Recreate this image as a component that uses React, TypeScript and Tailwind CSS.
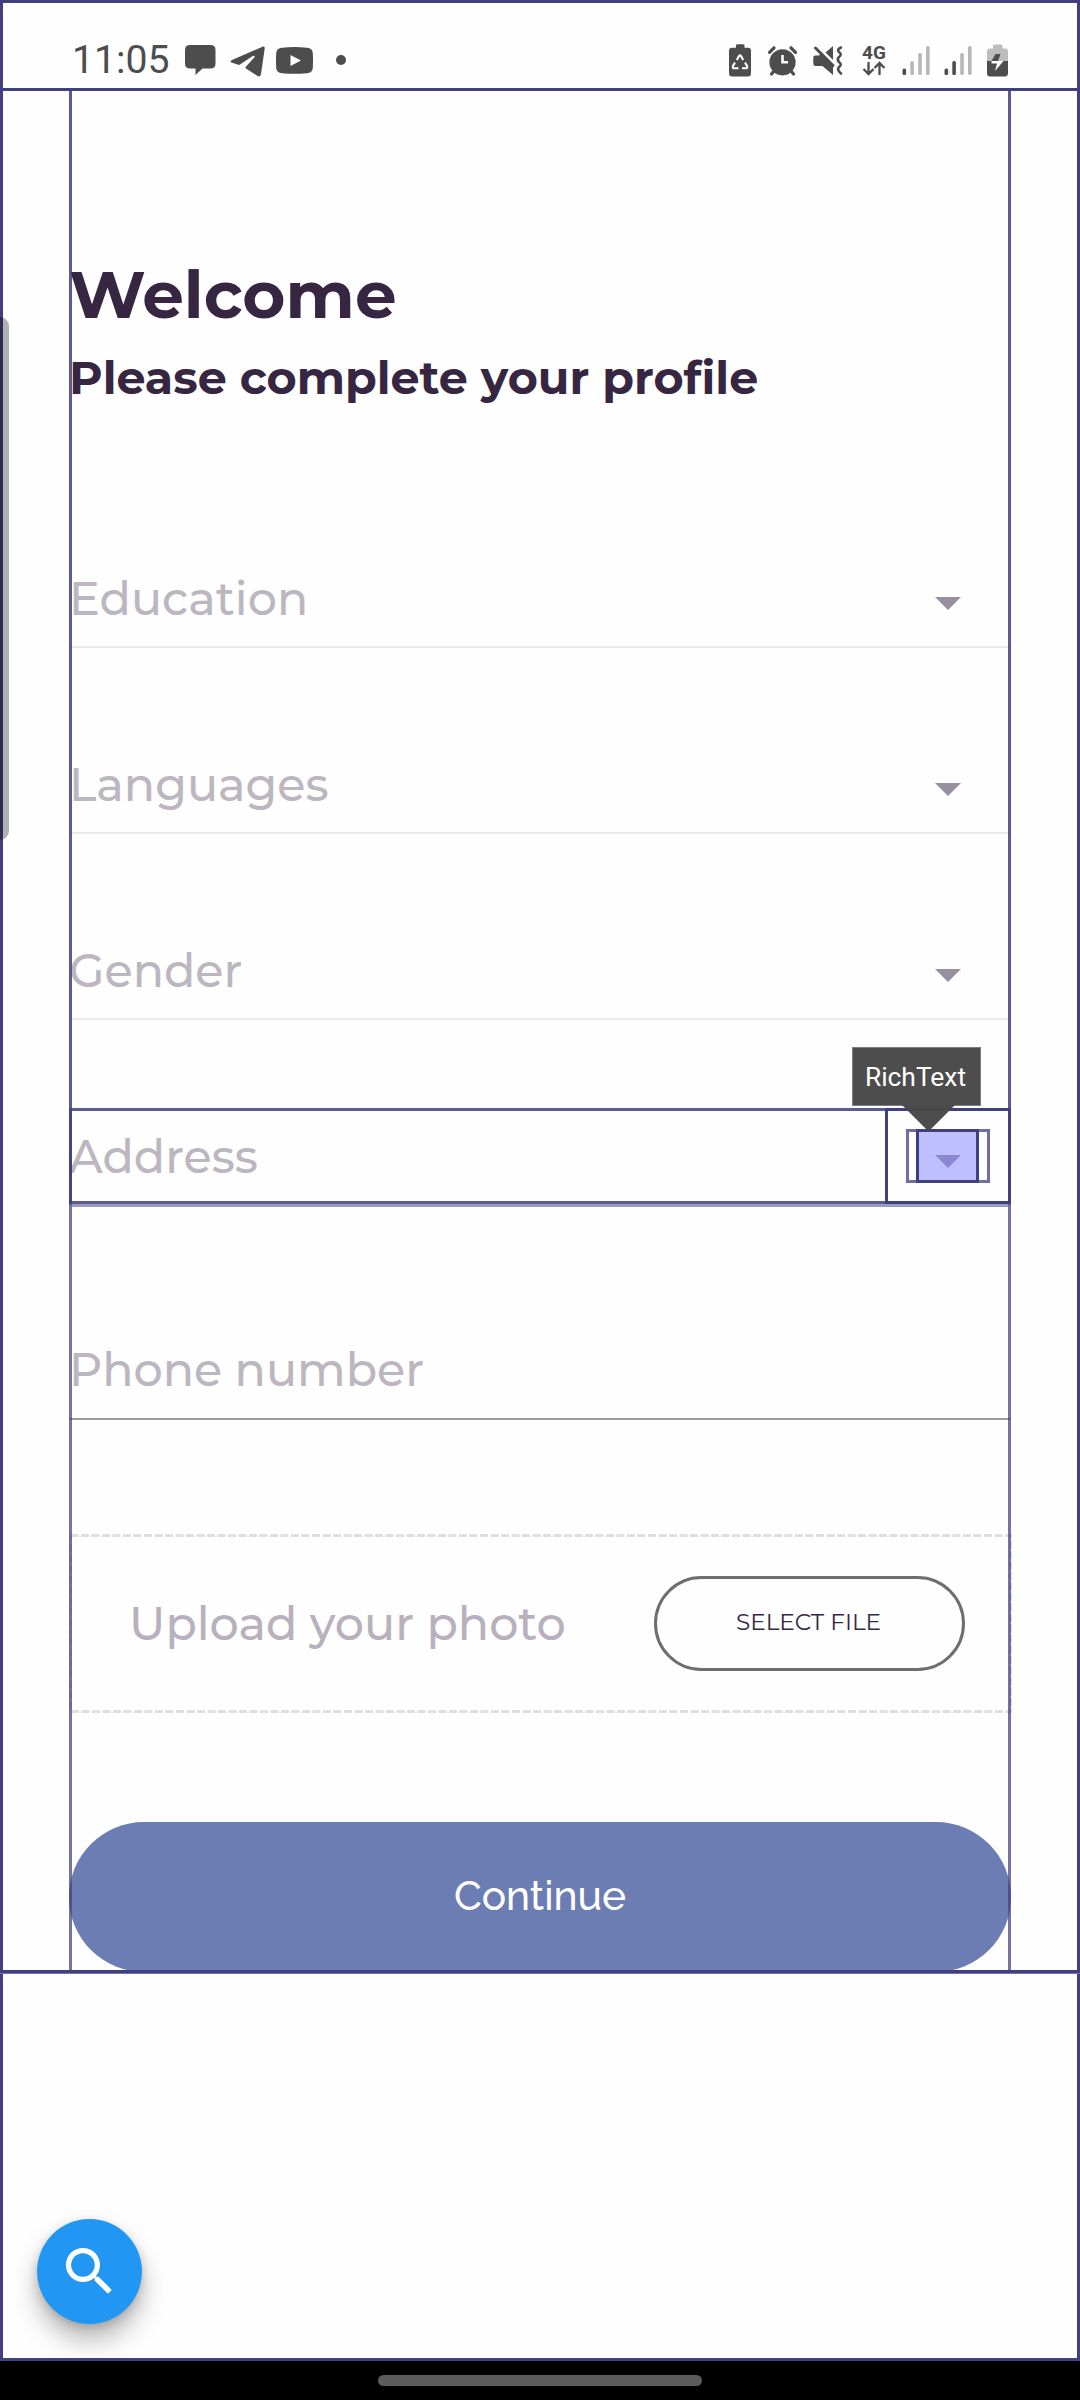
import React from "react";

const ink = "#4d4d4d";

function StatusIcon({ x, w, children }: { x: number; w: number; children: React.ReactNode }) {
  return (
    <svg width={w} height={40} viewBox={`${x} 40 ${w} 40`} fill={ink} className="shrink-0">
      {children}
    </svg>
  );
}

function StatusBar() {
  return (
    <header className="flex h-[88px] shrink-0 items-start pt-10 text-[#4d4d4d]">
      <div className="ml-[72px] flex w-[108px] items-center pt-px">
        <span className="whitespace-nowrap font-['Roboto'] text-[39.2px] leading-[38px] font-normal">11:05</span>
      </div>
      <StatusIcon x={180} w={45}>
        <path d="M190 45H210.500Q215.500 45 215.500 50V63.500Q215.500 68.500 210.500 68.500H202.500L195.500 75V68.500H190Q185 68.500 185 63.500V50Q185 45 190 45Z" />
      </StatusIcon>
      <StatusIcon x={225} w={45}>
        <path d="M263 46.600Q265 46.300 264.700 48.600L261 74Q260.400 77.600 257.300 75.800L246 68.400Q245 67.500 246 66.400L254.500 57.200Q255.200 55.200 252.800 56L240 64.600Q239 65.200 237.500 64.600L231.500 62.500Q229.500 61.500 231.500 60.200Z" />
      </StatusIcon>
      <StatusIcon x={270} w={50}>
        <path fillRule="evenodd" d="M282 47.700Q294.500 46.500 307 47.700Q312.400 48 312.800 53Q313.300 60.500 312.800 68Q312.400 73 307 73.300Q294.500 74.300 282 73.300Q276.700 73 276.200 68Q275.700 60.500 276.200 53Q276.700 48 282 47.700ZM290.500 55V66L301 60.500Z" />
      </StatusIcon>
      <StatusIcon x={320} w={40}>
        <circle cx={341} cy={60} r={5} />
      </StatusIcon>
      <div className="w-[360px]" />
      <StatusIcon x={720} w={44}>
        <path d="M736 45.500Q736 44.300 737.500 44.300H743Q744.500 44.300 744.500 45.500V47.700H748Q751 47.700 751 51V73Q751 76.500 748 76.500H732Q729 76.500 729 73V51Q729 47.700 732 47.700H736Z" />
        <path
          d="M736.800 60L739 56Q740 54.600 741 56L743.200 60M745 62.500L747.200 66.300Q747.600 68.200 746 68.300H742M738.500 68.300H734Q732.400 68.200 732.800 66.300L735 62.500"
          fill="none"
          stroke="#fefefe"
          strokeWidth={2.100}
          strokeLinejoin="round"
        />
      </StatusIcon>
      <StatusIcon x={764} w={44}>
        <circle cx={782.500} cy={62.300} r={13.100} />
        <path d="M769.500 52.300L774 47.800M795.500 52.300L791 47.800M774 71L771.500 74M791 71L793.500 74" fill="none" stroke={ink} strokeWidth={3.200} strokeLinecap="round" />
        <path d="M782.500 55V62.300H788" fill="none" stroke="#fefefe" strokeWidth={2.600} />
      </StatusIcon>
      <StatusIcon x={808} w={44}>
        <path d="M813.300 57.500Q813.300 55.500 815.500 55.500H819L821 53L833 65V75L822.500 66H815.500Q813.300 66 813.300 63.500Z" />
        <path d="M833 46V60L825.500 52.500Z" />
        <path d="M815.500 48L833 65.500" stroke={ink} strokeWidth={3} strokeLinecap="round" />
        <path d="M841 47.500Q836.500 49.500 839 52Q842.500 54.500 839 57Q836.500 59.500 839 62Q842.500 64.500 839 67Q836.500 69.500 841 73.500" fill="none" stroke={ink} strokeWidth={2.600} strokeLinecap="round" />
      </StatusIcon>
      <div className="flex h-10 w-[44px] flex-col items-center">
        <span className="mt-[5px] h-[16px] font-['Roboto'] text-[19px] leading-[16px] font-bold">4G</span>
        <svg width={44} height={16} viewBox="852 62 44 16" fill="none" stroke={ink} strokeWidth={2.300}>
          <path d="M868.500 63V74.500M863.500 70L868.500 75L873.500 70M879.500 76V64.500M874.500 69L879.500 64L884.500 69" />
        </svg>
      </div>
      <StatusIcon x={896} w={40}>
        <rect x={902.500} y={68.500} width={3.600} height={6.500} rx={1.500} />
        <g fill="#b8b8b8">
          <rect x={910.300} y={61} width={3.600} height={14} rx={1.500} />
          <rect x={918.200} y={53} width={3.600} height={22} rx={1.500} />
          <rect x={926} y={46} width={3.600} height={29} rx={1.500} />
        </g>
      </StatusIcon>
      <StatusIcon x={936} w={40}>
        <rect x={944.500} y={68.500} width={3.600} height={6.500} rx={1.500} />
        <rect x={952.300} y={61} width={3.600} height={14} rx={1.500} />
        <g fill="#b8b8b8">
          <rect x={960.200} y={53} width={3.600} height={22} rx={1.500} />
          <rect x={968} y={46} width={3.600} height={29} rx={1.500} />
        </g>
      </StatusIcon>
      <StatusIcon x={976} w={40}>
        <path fill="#bdbdbd" d="M993 46Q993 44.500 994.500 44.500H1001Q1002.500 44.500 1002.500 46V48.500H1005Q1008 48.500 1008 51.500V61H987V51.500Q987 48.500 990 48.500H993Z" />
        <path d="M987 61H1008V73Q1008 76.500 1005 76.500H990Q987 76.500 987 73Z" />
        <path d="M995.500 54H1000.500L998 61H991.500Z" />
        <path fill="#fefefe" d="M991.500 61H1003.500L995 71L997 63.500H991.500Z" />
      </StatusIcon>
    </header>
  );
}

function Caret() {
  return (
    <svg width={26} height={13} viewBox="0 0 26 13" className="mt-[9px]">
      <path d="M0 0H26L13 13Z" fill="#988fa2" />
    </svg>
  );
}

type FieldProps = { label: string; box: string; line: string; dropdown?: boolean };

function Field({ label, box, line, dropdown }: FieldProps) {
  return (
    <div className={`flex flex-col justify-end border-b-2 ${box} ${line}`}>
      <div className="flex h-[60px] items-center justify-between pr-[50px]">
        <span className="text-[46px] leading-[60px] font-medium whitespace-nowrap text-[#bcb6c0]">{label}</span>
        {dropdown && <Caret />}
      </div>
    </div>
  );
}

/** Widget-inspector outlines, drawn above the screen. */
function Inspector() {
  return (
    <div className="pointer-events-none absolute inset-0">
      <div className="absolute inset-x-0 top-0 h-[2361px] border-[3px] border-[#403f80]" />
      <div className="absolute inset-x-0 top-[88px] h-[3px] bg-[#403f80]" />
      <div className="absolute inset-x-0 top-[1970px] h-1 border-b border-[#7472a6] bg-[#403f80]" />
      <div className="absolute top-[91px] left-[69px] h-[1114px] w-[942px] border-x-[3px] border-[#403f80]/85" />
      <div className="absolute top-[1205px] left-[69px] h-[765px] w-[942px] border-x-[3px] border-[#403f80]/73" />
      <div className="absolute top-[1108px] left-[69px] h-[96px] w-[942px] border-[3px] border-[#403f80]/85" />
      <div className="absolute top-[1204px] left-[72px] h-[3px] w-[936px] bg-[#9c9abf]" />
      <div className="absolute top-[1108px] left-[885px] h-[96px] w-[126px] border-[3px] border-[#403f80]" />
      <div className="absolute top-[1129px] left-[906px] h-[54px] w-[84px] border-[3px] border-[#403f80]/75" />
      <div className="absolute top-[1129px] left-[916px] h-[54px] w-[63px] border-[3px] border-[#403f80] bg-[#8080ff]/50" />
      <div className="absolute top-[1047px] left-[852px] flex h-[59px] w-[129px] items-center justify-center border border-[#7d7d7d] bg-[#4d4d4d] pt-px pr-[2px]">
        <span className="font-['Roboto'] text-[26.4px] leading-[30px] text-white">RichText</span>
      </div>
      <svg className="absolute top-[1105px] left-[902px]" width={53} height={27} viewBox="0 0 53 27">
        <path d="M0 0H53L26.500 26.500Z" fill="#474747" fillOpacity={0.97} />
      </svg>
      <div className="absolute top-[317px] left-0 h-[523px] w-[9px] rounded-r-[9px] bg-black/30" />
    </div>
  );
}

export default function App() {
  return (
    <div className="relative flex h-[2400px] w-[1080px] flex-col overflow-hidden bg-[#fefefe] font-['Montserrat','Inter','Liberation_Sans',sans-serif]">
      <StatusBar />
      <main className="mx-[69px] flex flex-col pt-[3px]">
        <h1 className="mt-[164px] h-20 text-[66px] leading-[80px] font-bold whitespace-nowrap text-[#362641]">Welcome</h1>
        <h2 className="mt-[13px] h-[60px] text-[46px] leading-[60px] font-bold whitespace-nowrap text-[#362641]">Please complete your profile</h2>
        <div className="mt-[54px] flex flex-col">
          <Field label="Education" box="h-[186px] pb-[17px]" line="border-[#ebebeb]" dropdown />
          <Field label="Languages" box="h-[186px] pb-[17px]" line="border-[#ebebeb]" dropdown />
          <Field label="Gender" box="h-[186px] pb-[17px]" line="border-[#ebebeb]" dropdown />
          <Field label="Address" box="h-[186px] pb-[17px]" line="border-[#ebebeb]" dropdown />
          <Field label="Phone number" box="h-[214px] pb-[18px]" line="border-[#9b9b9b]" />
        </div>
        <section className="relative mt-[114px] flex h-[179px] items-center justify-between pr-[46px] pl-[60px]">
          <svg className="absolute inset-0" width={943} height={179} fill="none" stroke="#dedede" strokeWidth={3}>
            <rect x={1.500} y={1.500} width={940} height={176} strokeDasharray="8 2.500" />
          </svg>
          <span className="text-[46px] leading-[60px] font-medium whitespace-nowrap text-[#b8b1bd]">Upload your photo</span>
          <button className="flex h-[95px] w-[311px] items-center justify-center rounded-full border-[3px] border-[#6e6e6e] pr-[2px] pb-[3px] text-[23.200px] leading-[30px] text-[#382745]">
            SELECT FILE
          </button>
        </section>
        <button className="mt-[109px] flex h-[150px] items-center justify-center rounded-full bg-[#6c7db3] pb-[2px] text-white">
          <span className="font-['Raleway','Lato',sans-serif] text-[40.700px] leading-[50px] font-medium">Continue</span>
        </button>
      </main>
      <button className="absolute top-[2219px] left-[37px] flex size-[105px] items-center justify-center rounded-full bg-[#2196f3] shadow-[0_16px_26px_rgba(0,0,0,0.28),0_3px_10px_rgba(0,0,0,0.16)]">
        <svg width={63} height={63} viewBox="0 0 24 24" fill="white">
          <path d="M15.500 14h-.79l-.28-.27A6.471 6.471 0 0 0 16 9.500 6.500 6.500 0 1 0 9.500 16c1.610 0 3.090-.59 4.230-1.570l.27.28v.79l5 4.990L20.490 19l-4.990-5zm-6 0C7.010 14 5 11.990 5 9.500S7.010 5 9.500 5 14 7.010 14 9.500 11.990 14 9.500 14z" />
        </svg>
      </button>
      <Inspector />
      <footer className="absolute inset-x-0 bottom-0 flex h-[39px] justify-center bg-black pt-[14px]">
        <div className="h-[11px] w-[324px] rounded-full bg-[#5c5c5c]" />
      </footer>
    </div>
  );
}
